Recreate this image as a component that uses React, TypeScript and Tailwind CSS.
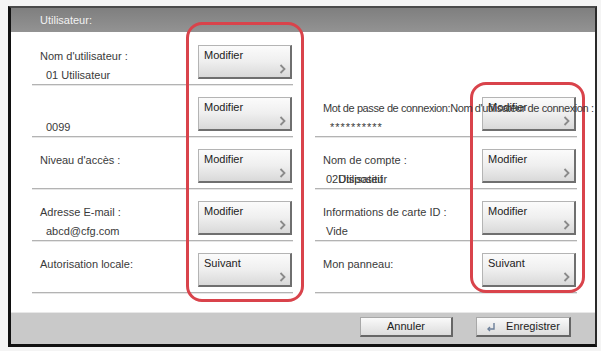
import React from 'react';

type Row = {
  label?: React.ReactNode;
  value?: React.ReactNode;
  action: string;
};

const leftRows: Row[] = [
  { label: "Nom d'utilisateur :", value: '01 Utilisateur', action: 'Modifier' },
  { value: '0099', action: 'Modifier' },
  { label: "Niveau d'accès :", action: 'Modifier' },
  { label: 'Adresse E-mail :', value: 'abcd@cfg.com', action: 'Modifier' },
  { label: 'Autorisation locale:', action: 'Suivant' },
];

const rightRows: Row[] = [
  { action: '' },
  {
    label: (
      <span className="relative z-10 whitespace-nowrap tracking-[-0.4px]">
        Mot de passe de connexion:Nom d'utilisateur de connexion :
      </span>
    ),
    value: <span className="pl-[4px] tracking-[1px]">**********</span>,
    action: 'Modifier',
  },
  {
    label: 'Nom de compte :',
    value: (
      <span className="whitespace-nowrap">
        02
        <span className="relative inline-block">
          Utilisateur
          <span className="absolute left-0 top-0">Dispositif</span>
        </span>
      </span>
    ),
    action: 'Modifier',
  },
  { label: 'Informations de carte ID :', value: 'Vide', action: 'Modifier' },
  { label: 'Mon panneau:', action: 'Suivant' },
];

function Chevron() {
  return (
    <svg width="7" height="10" viewBox="0 0 7 10" className="absolute right-[4px] bottom-[3px]">
      <polyline points="1.5,1 5.5,5 1.5,9" fill="none" stroke="#8a8a8a" strokeWidth="1.8" />
    </svg>
  );
}

function ActionButton({ text }: { text: string }) {
  return (
    <div className="relative mt-[11px] mr-[1px] h-[34px] w-[94px] shrink-0 border border-[#b4b4b4] border-r-2 border-b-2 border-r-[#6f6f6f] border-b-[#6f6f6f] bg-gradient-to-b from-[#fbfbfb] via-[#efefef] to-[#d9d9d9] pl-[5px] pt-[3px] text-[11px] leading-[13px] text-[#222]">
      {text}
      <Chevron />
    </div>
  );
}

function Column({ rows, indent }: { rows: Row[]; indent: string }) {
  return (
    <div className="flex flex-col">
      {rows.map((row, i) => (
        <div key={i}>
          <div className="flex h-[50px] justify-between">
            <div className="relative z-10 min-w-0 flex-1 pl-[8px] pt-[13px] text-[11px] leading-[19px] text-[#3a3a3a]">
              <div className="h-[19px]">{row.label}</div>
              {row.value && <div className={indent}>{row.value}</div>}
            </div>
            {row.action && <ActionButton text={row.action} />}
          </div>
          {row.action ? (
            <div className="border-t border-b border-t-[#b3b3b3] border-b-[#e6e6e6]" />
          ) : (
            <div className="h-[2px]" />
          )}
        </div>
      ))}
    </div>
  );
}

export default function App() {
  return (
    <div
      className="relative h-[351px] w-[601px] overflow-hidden bg-[#f4f4f4] pl-[8px] pt-[6px]"
      style={{ fontFamily: '"Liberation Sans", Arial, sans-serif' }}
    >
      <div className="flex h-[341px] w-[589px] flex-col border-t-2 border-r-2 border-l-[3px] border-b-[3px] border-t-[#4a4a4a] border-r-[#2a2a2a] border-l-[#111] border-b-[#111] bg-white">
        {/* Header */}
        <div className="flex h-[24px] items-center bg-gradient-to-b from-[#7f7f7f] to-[#939393] pl-[29px] text-[11px] text-[#f2f2f2]">
          Utilisateur:
        </div>

        {/* Body */}
        <div className="grid h-[280px] grid-cols-[261px_262px] gap-x-[22px] pl-[21px] pt-[2px]">
          <Column rows={leftRows} indent="pl-[6px]" />
          <Column rows={rightRows} indent="pl-[3px]" />
        </div>

        {/* Footer */}
        <div className="flex h-[32px] items-start justify-end gap-[23px] border-t border-t-[#e8e8e8] bg-[#c9c9c9] pr-[24px] pt-[4px]">
          <div className="flex h-[20px] w-[93px] items-center justify-center border border-[#a8a8a8] border-r-2 border-b-2 border-r-[#666] border-b-[#666] bg-gradient-to-b from-[#fafafa] to-[#dcdcdc] text-[11px] text-[#222]">
            Annuler
          </div>
          <div className="flex h-[20px] w-[95px] items-center justify-center gap-[10px] border border-[#a8a8a8] border-r-2 border-b-2 border-r-[#666] border-b-[#666] bg-gradient-to-b from-[#fafafa] to-[#dcdcdc] text-[11px] text-[#222]">
            <svg width="10" height="10" viewBox="0 0 10 10">
              <polyline points="8,1 8,7 2,7" fill="none" stroke="#6c7f99" strokeWidth="1.4" />
              <polyline points="4,5 2,7 4,9" fill="none" stroke="#6c7f99" strokeWidth="1.4" />
            </svg>
            Enregistrer
          </div>
        </div>
      </div>

      {/* Red highlight annotations */}
      <div className="pointer-events-none absolute left-[186px] top-[22px] h-[280px] w-[118px] rounded-[16px] border-[3px] border-[#d9434b]" />
      <div className="pointer-events-none absolute left-[470px] top-[82px] h-[211px] w-[115px] rounded-[16px] border-[3px] border-[#d9434b]" />
    </div>
  );
}
